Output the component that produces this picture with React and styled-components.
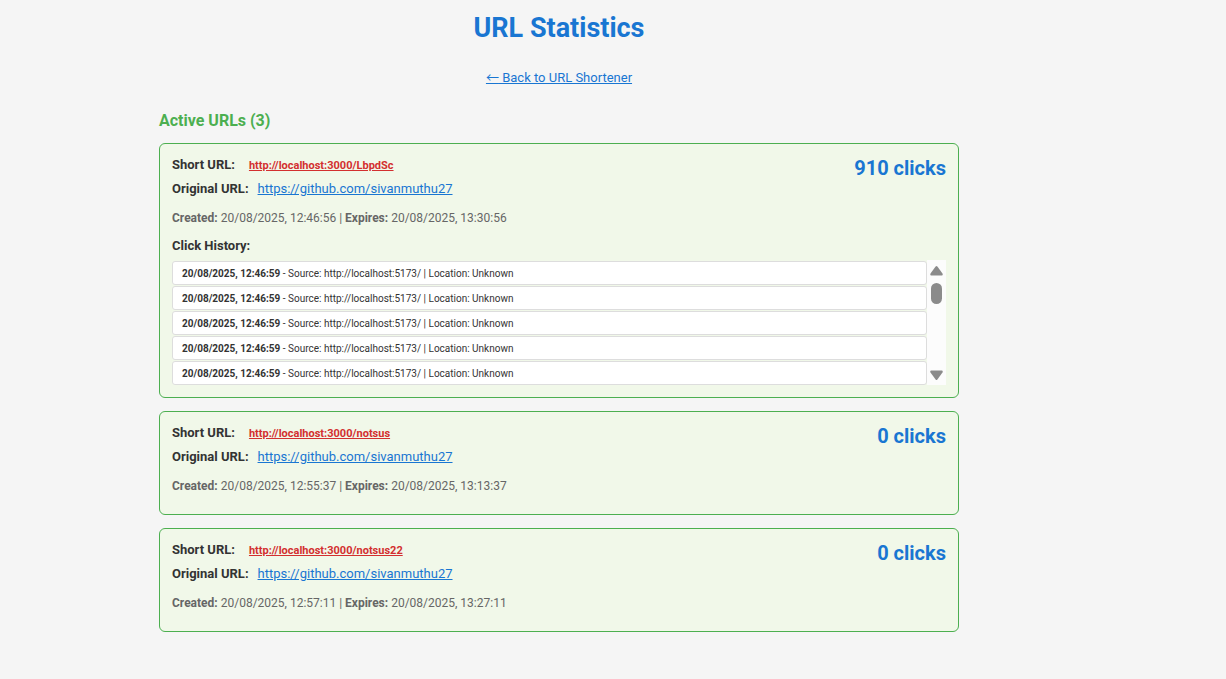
import React from "react";
import styled, { createGlobalStyle } from "styled-components";

const GlobalStyle = createGlobalStyle`
  *, *::before, *::after { box-sizing: border-box; }
  body {
    margin: 0;
    background: #f5f5f5;
    color: #333333;
    font-family: Roboto, "Liberation Sans", sans-serif;
    font-size: 13px;
    line-height: 18px;
  }
`;

const Page = styled.main`
  display: flex;
  justify-content: center;
  padding: 8px 108px 48px 0;
`;

const Content = styled.div`
  display: flex;
  flex-direction: column;
  width: 100%;
  max-width: 800px;
`;

const Title = styled.h1`
  margin: 0;
  color: #1976d2;
  font-size: 27px;
  font-weight: 700;
  line-height: 40px;
  text-align: center;
`;

const BackLink = styled.a`
  align-self: center;
  margin-top: 21px;
  color: #1976d2;
`;

const Arrow = styled.span`
  font-family: "Noto Sans CJK JP", sans-serif;
  line-height: 1;
`;

const SectionTitle = styled.h2`
  margin: 24px 0 12px;
  color: #4caf50;
  font-size: 16px;
  font-weight: 700;
  line-height: 20px;
`;

const CardList = styled.div`
  display: flex;
  flex-direction: column;
  gap: 13px;
`;

const Card = styled.article`
  padding: 12px;
  border: 1px solid #4caf50;
  border-radius: 6px;
  background: #f1f8e9;
`;

const CardHeader = styled.div`
  display: flex;
  justify-content: space-between;
  align-items: flex-start;
`;

const Fields = styled.div`
  display: flex;
  flex-direction: column;
  gap: 6px;
`;

const Field = styled.div`
  display: flex;
  align-items: baseline;
  gap: ${(p) => p.$gap};
  height: 18px;
`;

const Label = styled.span`
  font-weight: 700;
`;

const ShortLink = styled.a`
  color: #d32f2f;
  font-size: 11px;
  font-weight: 700;
`;

const OriginalLink = styled.a`
  color: #1976d2;
`;

const Clicks = styled.strong`
  color: #1976d2;
  font-size: 20px;
  font-weight: 700;
  line-height: 24px;
`;

const Dates = styled.p`
  margin: 11px 0 7px;
  color: #666666;
  font-size: 12px;
`;

const HistoryTitle = styled.h3`
  margin: 10px 0 5px;
  font-size: 13px;
  font-weight: 700;
`;

const History = styled.div`
  display: flex;
  height: 125px;
`;

const HistoryList = styled.ul`
  display: flex;
  flex: 1;
  flex-direction: column;
  gap: 1px;
  margin: 0;
  padding: 1px 0 0;
  overflow: hidden;
  list-style: none;
`;

const HistoryItem = styled.li`
  flex-shrink: 0;
  padding: 4px 9px 2px;
  border: 1px solid #dddddd;
  border-radius: 3px;
  background: #ffffff;
  font-size: 10px;
  line-height: 16px;
`;

const ScrollTrack = styled.div`
  display: flex;
  flex-direction: column;
  align-items: center;
  width: 19px;
  padding: 6px 0 5px;
  background: #fcfcfc;
`;

const ScrollThumb = styled.div`
  width: 11px;
  height: 21px;
  margin: 7px 0 auto;
  border-radius: 6px;
  background: #8b8b8b;
`;

const ScrollButton = styled.button`
  display: flex;
  padding: 0;
  border: 0;
  background: none;
`;

const urls = [
  {
    short: "http://localhost:3000/LbpdSc",
    clicks: 910,
    created: "20/08/2025, 12:46:56",
    expires: "20/08/2025, 13:30:56",
    history: Array(5).fill("20/08/2025, 12:46:59"),
  },
  {
    short: "http://localhost:3000/notsus",
    clicks: 0,
    created: "20/08/2025, 12:55:37",
    expires: "20/08/2025, 13:13:37",
    history: [],
  },
  {
    short: "http://localhost:3000/notsus22",
    clicks: 0,
    created: "20/08/2025, 12:57:11",
    expires: "20/08/2025, 13:27:11",
    history: [],
  },
];

const original = "https://github.com/sivanmuthu27";

function ClickHistory({ items }) {
  return (
    <>
      <HistoryTitle>Click History:</HistoryTitle>
      <History>
        <HistoryList>
          {items.map((time, i) => (
            <HistoryItem key={i}>
              <strong>{time}</strong> - Source: http://localhost:5173/ | Location: Unknown
            </HistoryItem>
          ))}
        </HistoryList>
        <ScrollTrack>
          <ScrollButton type="button" aria-label="Scroll up">
            <svg width="13" height="10" viewBox="0 0 13 10" fill="#8b8b8b">
              <path d="M5.6.6Q6.5-.4 7.4.6L12.5 7.4Q13.3 9.5 11.7 9.5H1.3Q-.3 9.5.5 7.4Z" />
            </svg>
          </ScrollButton>
          <ScrollThumb />
          <ScrollButton type="button" aria-label="Scroll down">
            <svg width="13" height="10" viewBox="0 0 13 10" fill="#8b8b8b">
              <path d="M5.6 9.4Q6.5 10.4 7.4 9.4L12.5 2.6Q13.3.5 11.7.5H1.3Q-.3.5.5 2.6Z" />
            </svg>
          </ScrollButton>
        </ScrollTrack>
      </History>
    </>
  );
}

export default function App() {
  return (
    <>
      <GlobalStyle />
      <Page>
        <Content>
          <Title>URL Statistics</Title>
          <BackLink href="#shortener">
            <Arrow>←</Arrow> Back to URL Shortener
          </BackLink>
          <SectionTitle>Active URLs (3)</SectionTitle>
          <CardList>
            {urls.map((u) => (
              <Card key={u.short}>
                <CardHeader>
                  <Fields>
                    <Field $gap="14px">
                      <Label>Short URL:</Label>
                      <ShortLink href={u.short}>{u.short}</ShortLink>
                    </Field>
                    <Field $gap="9px">
                      <Label>Original URL:</Label>
                      <OriginalLink href={original}>{original}</OriginalLink>
                    </Field>
                  </Fields>
                  <Clicks>{u.clicks} clicks</Clicks>
                </CardHeader>
                <Dates>
                  <strong>Created:</strong> {u.created} | <strong>Expires:</strong> {u.expires}
                </Dates>
                {u.history.length > 0 && <ClickHistory items={u.history} />}
              </Card>
            ))}
          </CardList>
        </Content>
      </Page>
    </>
  );
}
